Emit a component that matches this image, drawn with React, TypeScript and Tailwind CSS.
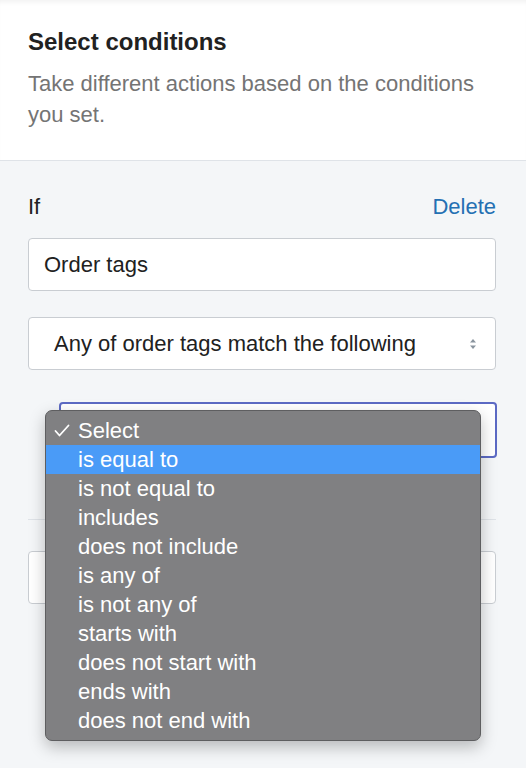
import React from "react";

const options = [
	"is equal to",
	"is not equal to",
	"includes",
	"does not include",
	"is any of",
	"is not any of",
	"starts with",
	"does not start with",
	"ends with",
	"does not end with",
];

const SelectArrows = () => (
	<svg width="8" height="12" viewBox="0 0 8 12" className="shrink-0">
		<path d="M4 1 L7 4.5 H1 Z" fill="#8a949e" />
		<path d="M4 11 L7 7.5 H1 Z" fill="#8a949e" />
	</svg>
);

const Check = () => (
	<svg width="16" height="13" viewBox="0 0 16 13" className="ml-[8px] mr-[8px]">
		<path d="M1.5 7 L5.5 11.5 L14.5 1.5" fill="none" stroke="white" strokeWidth="1.8" strokeLinecap="round" strokeLinejoin="round" />
	</svg>
);

const App = () => {
	return (
		<div
			className="relative w-[526px] h-[768px] overflow-hidden bg-[#f4f6f8] text-[#212121]"
			style={{ fontFamily: '"Liberation Sans", Arial, sans-serif' }}
		>
			{/* header */}
			<div className="bg-white border-b border-[#dfe3e8] px-[28px] pt-[28px] pb-[30px] h-[161px] shadow-[inset_0_5px_5px_-3px_rgba(0,0,0,0.06)]">
				<h2 className="text-[24px] leading-[28px] font-bold">Select conditions</h2>
				<p className="mt-[12px] text-[22px] leading-[31px] text-[#747474]">
					Take different actions based on the conditions you set.
				</p>
			</div>

			{/* condition */}
			<div className="px-[28px] pt-[31px] w-[526px] pr-[30px]">
				<div className="flex items-center justify-between text-[22px] leading-[30px]">
					<span>If</span>
					<span className="text-[#2470b3]">Delete</span>
				</div>

				<div className="mt-[16px] h-[53px] flex items-center px-[15px] bg-white border border-[#c9cdd2] rounded-[4px] text-[22px]">
					Order tags
				</div>

				<div className="mt-[26px] h-[53px] flex items-center justify-between pl-[25px] pr-[18px] bg-white border border-[#c9cdd2] rounded-[4px] text-[22px]">
					<span>Any of order tags match the following</span>
					<SelectArrows />
				</div>

				<div className="mt-[32px] ml-[31px] mr-[-1px] h-[56px] bg-white border-2 border-[#5c6ac4] rounded-[4px]" />

				<div className="mt-[61px] border-t border-[#dfe3e8]" />

				<div className="mt-[31px] h-[53px] bg-white border border-[#c9cdd2] rounded-[4px]" />
			</div>

			{/* native popup menu */}
			<div className="absolute left-[45px] top-[410px] w-[436px] h-[331px] bg-[#808082] border border-[#5e5e60] rounded-[7px] pt-[5px] shadow-[0_6px_16px_rgba(0,0,0,0.25)] text-white text-[22px] leading-[29px]">
				<div className="flex items-center h-[29px]">
					<Check />
					<span>Select</span>
				</div>
				{options.map((o, i) => (
					<div
						key={o}
						className={`flex items-center h-[29px] pl-[32px] ${i === 0 ? "bg-[#4a9bf7]" : ""}`}
					>
						{o}
					</div>
				))}
			</div>
		</div>
	);
};

export default App;
